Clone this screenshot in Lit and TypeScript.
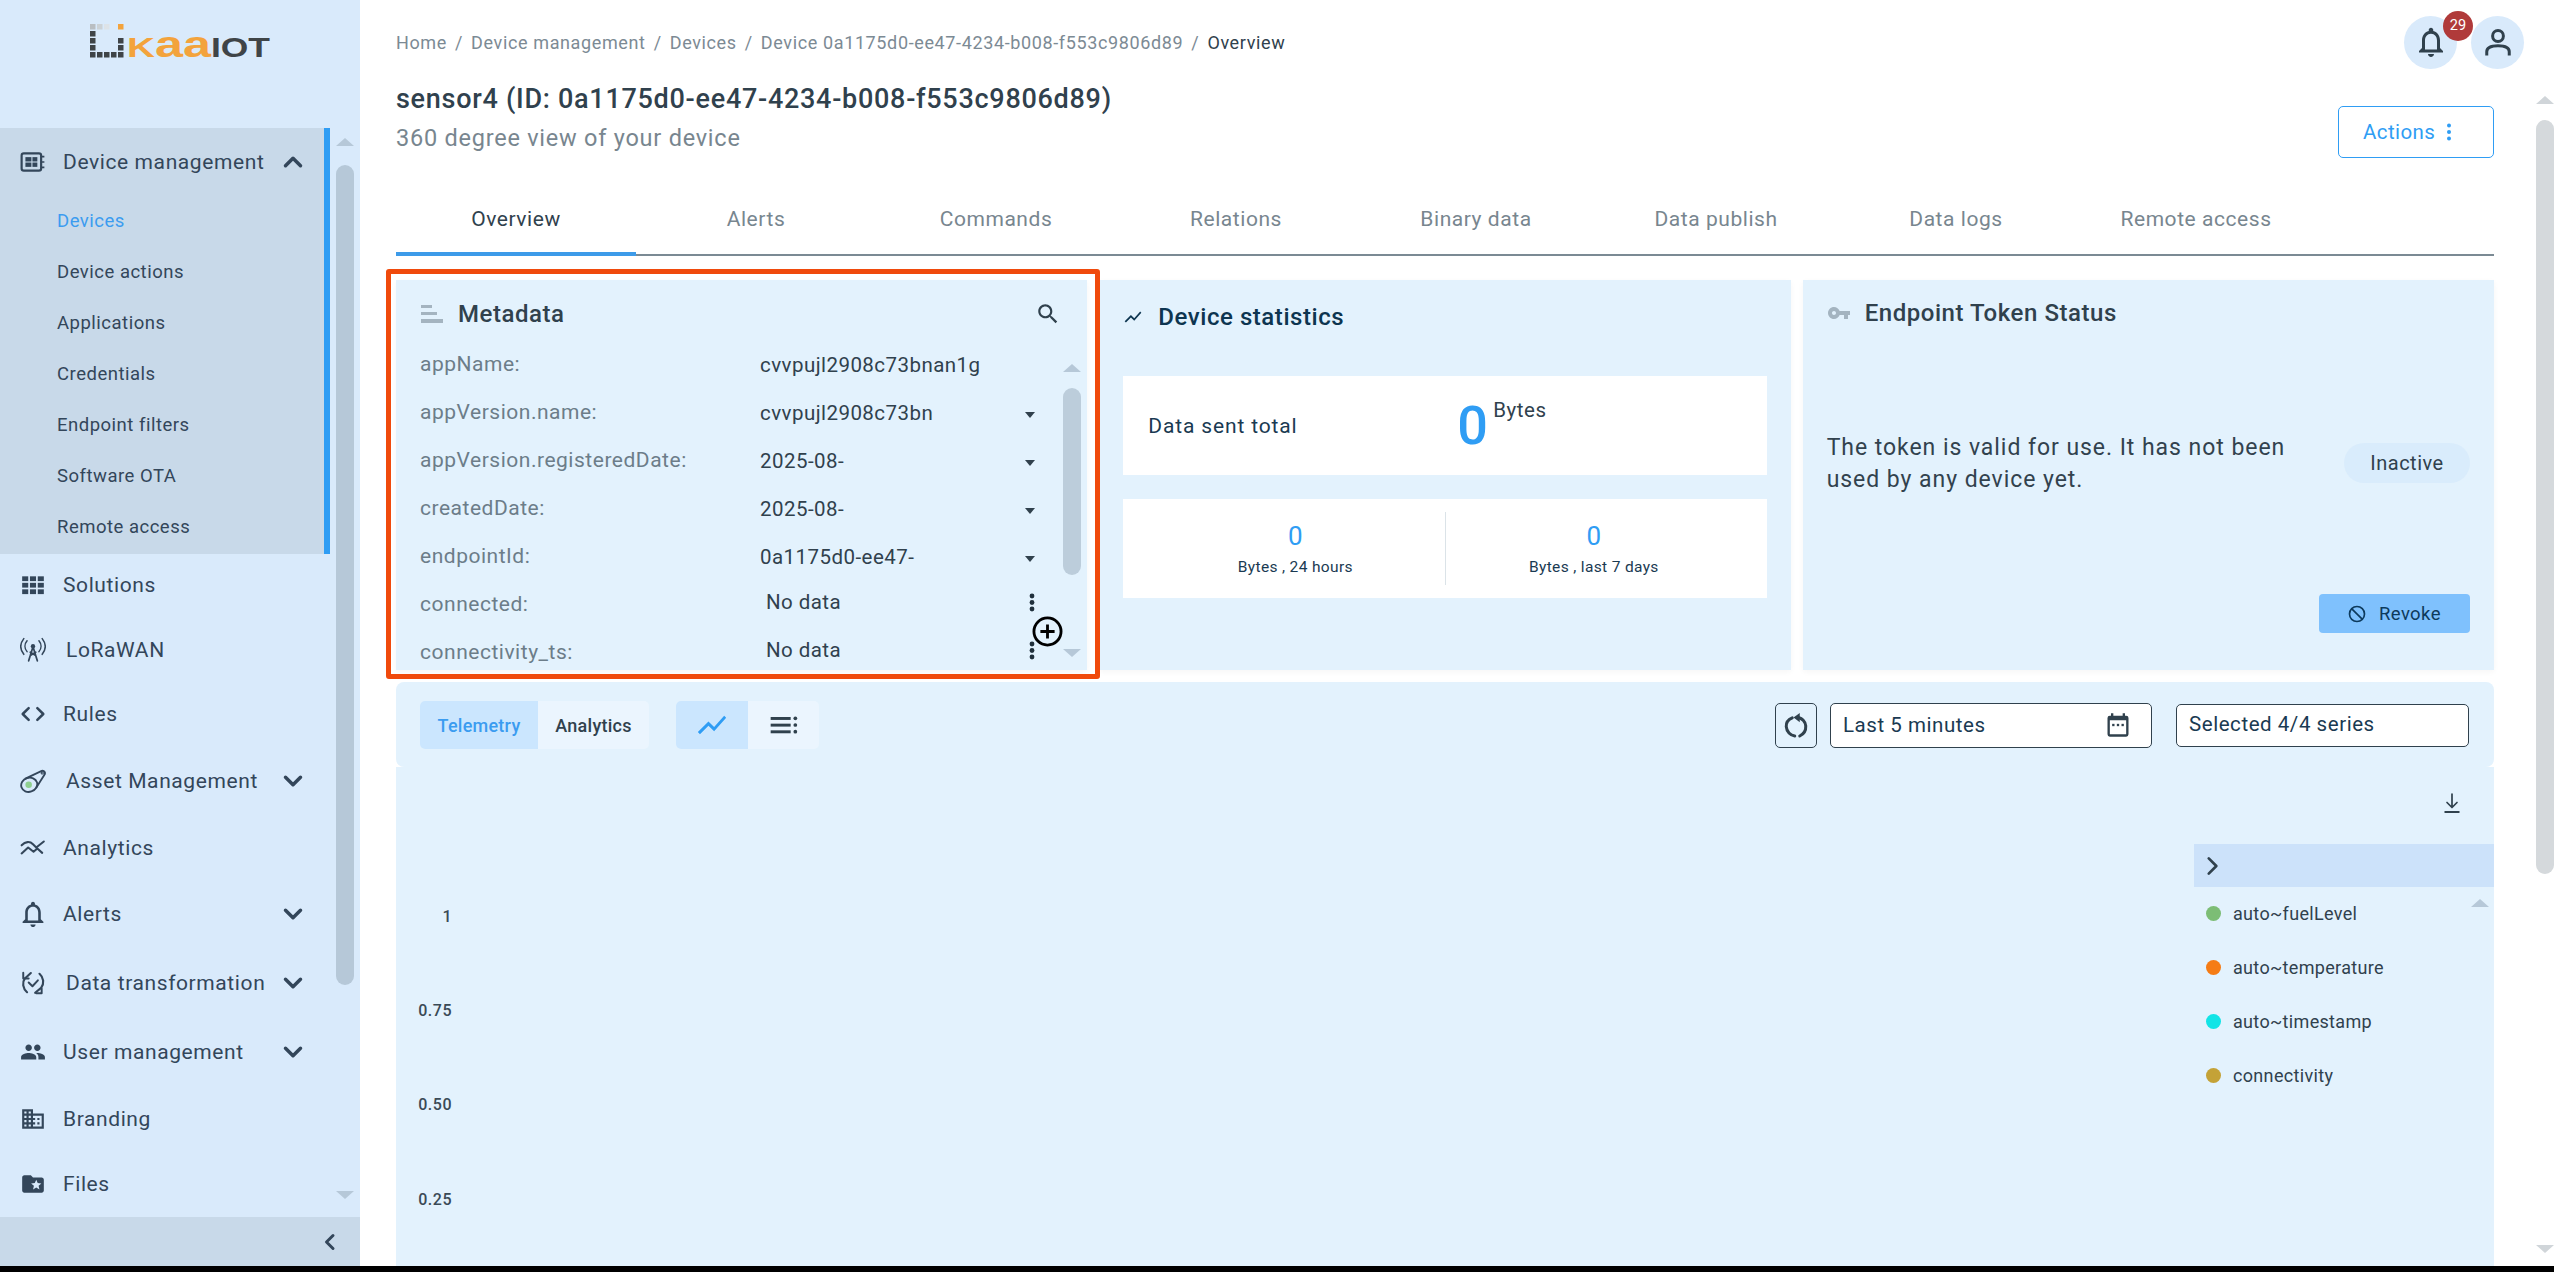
import { LitElement, html, css, svg } from "lit";
import { customElement } from "lit/decorators.js";

const p = (d: string) => svg`<path d=${d} fill="currentColor"></path>`;
const ic = (body: unknown, cls = "i24", vb = "0 0 24 24") => html`<svg class=${cls} viewBox=${vb}>${body}</svg>`;
const stroke = (d: string, w = 2) => svg`<path d=${d} fill="none" stroke="currentColor" stroke-width=${w} stroke-linecap="round" stroke-linejoin="round"></path>`;

const BELL = "M12 22c1.1 0 2-.9 2-2h-4c0 1.1.9 2 2 2zm6-6v-5c0-3.07-1.63-5.64-4.5-6.32V4c0-.83-.67-1.5-1.5-1.5s-1.5.67-1.5 1.5v.68C7.64 5.36 6 7.92 6 11v5l-2 2v1h16v-1l-2-2zm-2 1H8v-6c0-2.48 1.51-4.5 4-4.5s4 2.02 4 4.5v6z";
const PEOPLE = "M16 11c1.66 0 2.99-1.34 2.99-3S17.66 5 16 5c-1.66 0-3 1.34-3 3s1.34 3 3 3zm-8 0c1.66 0 2.99-1.34 2.99-3S9.66 5 8 5C6.34 5 5 6.34 5 8s1.34 3 3 3zm0 2c-2.33 0-7 1.17-7 3.5V19h14v-2.5c0-2.33-4.67-3.5-7-3.5zm8 0c-.29 0-.62.02-.97.05 1.16.84 1.97 1.97 1.97 3.45V19h6v-2.5c0-2.33-4.67-3.5-7-3.5z";
const DOMAIN = "M12 7V3H2v18h20V7H12zM6 19H4v-2h2v2zm0-4H4v-2h2v2zm0-4H4V9h2v2zm0-4H4V5h2v2zm4 12H8v-2h2v2zm0-4H8v-2h2v2zm0-4H8V9h2v2zm0-4H8V5h2v2zm10 12h-8v-2h2v-2h-2v-2h2v-2h-2V9h8v10zm-2-8h-2v2h2v-2zm0 4h-2v2h2v-2z";
const FOLDER = "M20 6h-8l-2-2H4c-1.1 0-1.99.9-1.99 2L2 18c0 1.1.9 2 2 2h16c1.1 0 2-.9 2-2V8c0-1.1-.9-2-2-2zm-2.06 11L15 15.28 12.06 17l.78-3.33-2.59-2.24 3.41-.29L15 8l1.34 3.14 3.41.29-2.59 2.24.78 3.33z";
const SEARCH = "M15.5 14h-.79l-.28-.27C15.41 12.59 16 11.11 16 9.5 16 5.91 13.09 3 9.5 3S3 5.91 3 9.5 5.91 16 9.5 16c1.61 0 3.09-.59 4.23-1.57l.27.28v.79l5 4.99L20.49 19l-4.99-5zm-6 0C7.01 14 5 11.99 5 9.5S7.01 5 9.5 5 14 7.01 14 9.5 11.99 14 9.5 14z";
const KEY = "M12.65 10C11.83 7.67 9.61 6 7 6c-3.31 0-6 2.69-6 6s2.69 6 6 6c2.61 0 4.83-1.67 5.65-4H17v4h4v-4h2v-4H12.65zM7 14c-1.1 0-2-.9-2-2s.9-2 2-2 2 .9 2 2-.9 2-2 2z";
const CHART = "M3.5 18.49l6-6.01 4 4L22 6.92l-1.41-1.41-7.09 7.97-4-4L2 16.99z";

const icons: Record<string, unknown> = {
  device: svg`<rect x="1.5" y="4" width="18" height="16" rx="2" fill="none" stroke="currentColor" stroke-width="2"/><rect x="5" y="7.5" width="5.5" height="4" fill="currentColor"/><rect x="11.5" y="7.5" width="4.5" height="4" fill="currentColor"/><rect x="5" y="12.5" width="5.5" height="4" fill="currentColor"/><rect x="11.5" y="12.5" width="4.5" height="4" fill="currentColor"/><path d="M20 7h2.5M20 12h2.5M20 17h2.5" stroke="currentColor" stroke-width="1.6"/>`,
  apps: svg`${[0, 1, 2].map((r) => [0, 1, 2].map((c) => svg`<rect x=${2 + c * 7.2} y=${4 + r * 6} width="5.6" height="4.4" fill="currentColor"/>`))}`,
  antenna: svg`<circle cx="12" cy="8.5" r="2" fill="currentColor"/>${stroke("M12 9l-4 13M12 9l4 13M9.5 17l5-3M9.5 14l5 3", 1.6)}${stroke("M6.5 3.5c-2.5 3-2.5 7 0 10M17.5 3.5c2.5 3 2.5 7 0 10M3.5 1.5c-3.5 4.5-3.5 10 0 14.500M20.500 1.500c3.500 4.500 3.500 10 0 14.500", 1.4)}`,
  code: stroke("M8 6.500L2.500 12L8 17.500M16 6.500L21.500 12L16 17.500", 2.300),
  asset: svg`<ellipse cx="8.500" cy="15.500" rx="7.500" ry="6.500" fill="none" stroke="currentColor" stroke-width="1.700" transform="rotate(-18 8.500 15.500)"/><circle cx="8" cy="15.500" r="3" fill="#8fd08f"/><path d="M4.500 10L20 2.600C22.800 2.200 23.800 4.600 22.400 6.400L14.800 18.500" fill="none" stroke="currentColor" stroke-width="1.700"/><circle cx="20.500" cy="4.600" r="1" fill="none" stroke="currentColor" stroke-width="1"/>`,
  analytics: stroke("M1.500 9.500C5 6 9 5.500 12 8.500L15 11.500L22 6M1.500 17L7.500 11.500L12.500 15.500L16 12.500L20.500 16.500", 1.900),
  bell: svg`<svg x="0" y="0" width="24" height="24" viewBox="2 2 20 20">${p(BELL)}</svg>`,
  transform: svg`${stroke("M6.500 20.500C2.500 17 1.800 11.500 4.500 7.800M18 3.500C22 7 22.500 12.500 19.500 16.500M4.500 7.800L10 2.800M14 21L19.500 16.500", 2)}${stroke("M8 11.500L11.500 15L16.500 9.500M15 21.500H20V17M3 2.500V7.800H8", 1.800)}`,
  people: p(PEOPLE),
  domain: p(DOMAIN),
  folder: p(FOLDER),
};

const subItems = ["Devices", "Device actions", "Applications", "Credentials", "Endpoint filters", "Software OTA", "Remote access"];
const navItems = [
  { n: "Solutions", i: "apps", h: 61 },
  { n: "LoRaWAN", i: "antenna", h: 69, wide: true },
  { n: "Rules", i: "code", h: 60 },
  { n: "Asset Management", i: "asset", h: 74, wide: true, more: true },
  { n: "Analytics", i: "analytics", h: 59 },
  { n: "Alerts", i: "bell", h: 74, more: true },
  { n: "Data transformation", i: "transform", h: 64, wide: true, more: true },
  { n: "User management", i: "people", h: 74, more: true },
  { n: "Branding", i: "domain", h: 59 },
  { n: "Files", i: "folder", h: 71 },
];
const tabs = ["Overview", "Alerts", "Commands", "Relations", "Binary data", "Data publish", "Data logs", "Remote access"];
const meta = [
  { k: "appName:", v: "cvvpujl2908c73bnan1g", t: "" },
  { k: "appVersion.name:", v: "cvvpujl2908c73bn", t: "caret" },
  { k: "appVersion.registeredDate:", v: "2025-08-", t: "caret" },
  { k: "createdDate:", v: "2025-08-", t: "caret" },
  { k: "endpointId:", v: "0a1175d0-ee47-", t: "caret" },
  { k: "connected:", v: "No data", t: "dots" },
  { k: "connectivity_ts:", v: "No data", t: "dots" },
];
const legend = [
  { n: "auto~fuelLevel", c: "#7cbd75" },
  { n: "auto~temperature", c: "#f57c15" },
  { n: "auto~timestamp", c: "#12e4e6" },
  { n: "connectivity", c: "#c4a237" },
];
const logoBlocks: [number, number, string][] = [
  [0, 0, "#b9bec2"], [7, 0, "#ccd2d6"], [14, 0, "#dde3e8"],
  [0, 7, "#3f4447"], [0, 14, "#3f4447"], [0, 21, "#3f4447"], [0, 28, "#3f4447"],
  [7, 28, "#3f4447"], [14, 28, "#3f4447"], [21, 28, "#3f4447"], [28, 28, "#3f4447"],
  [28, 21, "#3f4447"], [28, 14, "#3f4447"],
  [28, 0, "#f3a33c"],
];

@customElement("app-root")
export class AppRoot extends LitElement {
  static styles = css`
    :host { display: block; width: 2554px; height: 1272px; overflow: hidden; background: #000; font-family: Roboto, "Noto Sans", sans-serif; color: #30414d; }
    * { box-sizing: border-box; }
    svg { display: block; flex: none; }
    .i24 { width: 26px; height: 26px; }
    .page { display: grid; grid-template-columns: 360px 1fr 18px; height: 1266px; background: #fff; overflow: hidden; }

    .side { background: #d9eafb; display: flex; flex-direction: column; height: 1266px; color: #33465a; }
    .logo { height: 128px; flex: none; padding: 24px 0 0 89px; }
    .logo svg { width: 182px; height: 44px; }
    .navwrap { flex: 1; display: flex; min-height: 0; overflow: hidden; }
    .nav { width: 336px; flex: none; }
    .group { width: 330px; height: 426px; background: #c8d9e9; border-right: 6px solid #2f9df4; }
    .row { display: flex; align-items: center; padding-left: 20px; font-size: 21px; letter-spacing: 0.6px; white-space: nowrap; }
    .row .ic { margin-right: 17px; }
    .row.wide .ic { margin-right: 20px; }
    .row .chev { margin-left: auto; margin-right: 28px; width: 30px; height: 30px; }
    .ghead { height: 67.5px; }
    .ghead .chev { margin-right: 16px; }
    .sub { height: 51px; padding-left: 57px; display: flex; align-items: center; font-size: 18.5px; letter-spacing: 0.5px; }
    .sub.on { color: #3b9cf0; }
    .sbar { width: 18px; flex: none; display: flex; flex-direction: column; align-items: center; }
    .sbar .top { height: 37px; display: flex; align-items: center; padding-bottom: 9px; }
    .sbar .thumb { width: 18px; height: 820px; border-radius: 9px; background: #b6c8d8; }
    .sbar .bot { margin-top: 206px; }
    .tri-up { width: 0; height: 0; border-left: 9px solid transparent; border-right: 9px solid transparent; border-bottom: 8px solid #b6c8d8; }
    .tri-down { width: 0; height: 0; border-left: 9px solid transparent; border-right: 9px solid transparent; border-top: 8px solid #b6c8d8; }
    .sfoot { height: 49px; flex: none; background: #c8d9e9; display: flex; align-items: center; justify-content: flex-end; padding-right: 18px; }
    .sfoot svg { width: 24px; height: 24px; }

    .main { padding: 0 42px 0 36px; min-width: 0; }
    .topbar { height: 84px; display: flex; align-items: center; justify-content: space-between; }
    .crumbs { font-size: 18px; letter-spacing: 0.63px; color: #7c8a94; display: flex; gap: 8px; }
    .crumbs b { font-weight: 400; color: #30414d; }
    .top-icons { display: flex; gap: 14px; margin-right: -30px; }
    .circ { width: 53px; height: 53px; border-radius: 50%; background: #d9eafb; display: flex; align-items: center; justify-content: center; position: relative; color: #30414d; }
    .circ svg { width: 36px; height: 36px; }
    .badge { position: absolute; right: -16px; top: -5px; width: 30px; height: 30px; border-radius: 50%; background: #b03a3a; color: #fff; font-size: 14.5px; display: flex; align-items: center; justify-content: center; }
    .head { height: 76px; display: flex; justify-content: space-between; }
    h1 { margin: 0; font-size: 27px; line-height: 30px; font-weight: 500; letter-spacing: 0.72px; color: #30414d; }
    .subt { margin-top: 6px; font-size: 23.5px; line-height: 36px; letter-spacing: 0.76px; color: #78868f; }
    .actions { margin-top: 22px; width: 156px; height: 52px; border: 1px solid #2f9df4; border-radius: 5px; display: flex; align-items: center; padding-left: 24px; gap: 6px; color: #2f9df4; font-size: 20.5px; letter-spacing: 0.4px; }
    .actions svg { width: 16px; height: 20px; }
    .tabs { margin-top: 22px; display: flex; border-bottom: 2px solid #7b8a94; height: 74px; }
    .tab { width: 240px; display: flex; align-items: center; justify-content: center; padding-top: 4px; font-size: 21px; letter-spacing: 0.55px; color: #78868f; height: 74px; border-bottom: 4px solid transparent; }
    .tab.on { color: #30414d; border-bottom-color: #3d9be9; }

    .cards { margin-top: 24px; display: grid; grid-template-columns: repeat(3, minmax(0, 1fr)); grid-template-rows: 390px; gap: 12px; }
    .card { background: #e3f2fd; position: relative; display: flex; flex-direction: column; min-height: 0; box-shadow: 0 2px 6px rgba(0, 0, 0, 0.04); }
    .chead { display: flex; align-items: center; gap: 14px; font-size: 24px; font-weight: 500; letter-spacing: 0.55px; padding-left: 24px; color: #30414d; flex: none; }
    .frame { position: absolute; left: -10px; top: -11px; width: 714px; height: 410px; border: 5px solid #f04a0c; border-radius: 3px; z-index: 5; pointer-events: none; }

    .m-head { height: 60px; padding-top: 7px; padding-right: 26px; }
    .m-head .lines { color: #a4b4c0; width: 24px; height: 24px; }
    .m-head .search { margin-left: auto; width: 26px; height: 26px; color: #30414d; }
    .m-rows { flex: 1; overflow: hidden; min-height: 0; }
    .m-row { height: 48px; display: flex; align-items: center; padding: 0 45px 0 24px; font-size: 20.5px; letter-spacing: 0.45px; }
    .m-key { width: 340px; flex: none; color: #6c7d89; font-size: 21px; letter-spacing: 0.52px; }
    .m-val { flex: 1; padding-top: 2px; color: #30414d; }
    .m-val.nd { padding: 0 0 4px 6px; }
    .m-ic { width: 24px; display: flex; justify-content: center; }
    .caret { width: 0; height: 0; border-left: 5.5px solid transparent; border-right: 5.5px solid transparent; border-top: 6.5px solid #30414d; margin-top: 6px; }
    .kebab { width: 6px; height: 19px; margin: -4px 0 0 4px; }
    .m-bar { position: absolute; right: 6px; top: 84px; width: 18px; height: 300px; display: flex; flex-direction: column; }
    .m-bar .thumb { width: 18px; height: 187px; border-radius: 9px; background: #bccddb; margin-top: 16px; }
    .m-bar .tri-down { margin-top: 74px; }
    .fab { position: absolute; left: 636px; top: 336px; width: 31px; height: 31px; color: #000; }

    .s-head { height: 74px; padding-left: 24px; color: #0d3550; gap: 15px; }
    .s-head svg { width: 20px; height: 20px; }
    .white { margin: 0 24px; height: 99px; background: #fff; flex: none; }
    .w1 { margin-top: 22px; display: flex; padding-left: 25px; align-items: center; color: #1a3a52; }
    .w1 .lbl { width: 309px; font-size: 21px; letter-spacing: 0.85px; flex: none; }
    .w1 .big { font-size: 54px; line-height: 54px; font-weight: 500; color: #2f9df4; width: 30px; margin-right: 6px; }
    .w1 .unit { align-self: flex-start; margin-top: 22px; line-height: 24px; font-size: 20.5px; letter-spacing: 0.5px; color: #30414d; }
    .w2 { margin-top: 24px; display: grid; grid-template-columns: 322px 322px; padding: 13px 0; }
    .col { display: flex; flex-direction: column; align-items: center; padding-top: 7px; height: 73px; color: #1a3a52; }
    .col.l { padding-left: 22px; }
    .col.r { border-left: 1px solid #dbe3e8; padding-right: 26px; }
    .col .v { font-size: 26px; line-height: 34px; color: #2f9df4; }
    .col .t { font-size: 15.5px; line-height: 28px; letter-spacing: 0.35px; }

    .t-head { height: 66px; }
    .t-head svg { width: 24px; height: 24px; color: #a4b4c0; }
    .t-body { margin: 85px 24px 0; display: flex; justify-content: space-between; align-items: center; height: 66px; }
    .t-text { width: 480px; font-size: 23px; line-height: 32px; letter-spacing: 0.95px; color: #32424e; }
    .pill { width: 126px; height: 40px; margin-top: -2px; border-radius: 20px; background: #d9ecfc; display: flex; align-items: center; justify-content: center; font-size: 20px; letter-spacing: 0.5px; }
    .t-foot { margin-top: auto; padding: 0 24px 37px; display: flex; justify-content: flex-end; }
    .revoke { width: 151px; height: 39px; background: #7fc1fd; border-radius: 4px; display: flex; align-items: center; padding-left: 28px; gap: 12px; color: #0d3a5c; font-size: 18.5px; letter-spacing: 0.4px; }
    .revoke svg { width: 20px; height: 20px; }

    .chart { margin-top: 12px; }
    .tool { height: 85px; background: #e3f2fd; border-radius: 8px; padding: 19px 25px 0 24px; display: flex; align-items: flex-start; }
    .toggle { display: flex; height: 48px; border-radius: 5px; overflow: hidden; background: #ebf5fe; font-size: 18px; letter-spacing: 0.25px; font-weight: 500; }
    .toggle > div { display: flex; align-items: center; justify-content: center; }
    .toggle .on { background: #cbe6fe; color: #3b9cf0; }
    .t1 { width: 118px; } .t2 { width: 111px; }
    .t3 { width: 72px; } .t4 { width: 71px; }
    .toggle.icons { margin-left: 27px; }
    .t3 svg { width: 34px; height: 34px; color: #2f9df4; }
    .t4 svg { width: 32px; height: 32px; }
    .refresh { margin-left: auto; margin-top: 2px; width: 42px; height: 45px; border: 1px solid #30414d; border-radius: 5px; display: flex; align-items: center; justify-content: center; }
    .refresh svg { width: 30px; height: 30px; }
    .input { background: #fff; border: 1.5px solid #30414d; border-radius: 5px; display: flex; align-items: center; font-size: 20.5px; letter-spacing: 0.55px; color: #1a3a52; }
    .date { margin: 2px 0 0 13px; width: 322px; height: 45px; padding: 0 19px 2px 12px; justify-content: space-between; }
    .date svg { width: 28px; height: 28px; color: #30414d; }
    .sel { margin: 3px 0 0 24px; width: 293px; height: 43px; padding: 0 0 3px 12px; }

    .cbody { height: 499px; background: #e3f2fd; display: flex; }
    .yaxis { width: 56px; flex: none; padding-top: 102px; font-size: 16px; font-weight: 500; letter-spacing: 0.5px; color: #3a4a56; text-align: right; }
    .yaxis div { height: 94.3px; display: flex; align-items: center; justify-content: flex-end; }
    .lgd { margin-left: auto; width: 300px; position: relative; }
    .dl { height: 77px; display: flex; justify-content: flex-end; align-items: center; padding: 0 30px 6px 0; }
    .dl svg { width: 24px; height: 24px; }
    .lhead { height: 43px; background: #cce2fa; display: flex; align-items: center; padding-left: 5px; }
    .lhead svg { width: 26px; height: 26px; }
    .item { height: 53.8px; display: flex; align-items: center; padding-left: 12px; gap: 12px; font-size: 18px; letter-spacing: 0.33px; color: #30414d; }
    .dot { width: 15px; height: 15px; border-radius: 50%; }
    .lgd .tri-up { position: absolute; right: 5px; top: 132px; }

    .pbar { display: flex; flex-direction: column; align-items: center; background: #fff; padding-top: 96px; }
    .pbar .thumb { width: 18px; height: 754px; border-radius: 9px; background: #d5d9dc; margin-top: 16px; }
    .pbar .tri-up { border-bottom-color: #d0d5d9; }
    .pbar .tri-down { border-top-color: #d0d5d9; margin-top: 371px; }
  `;

  render() {
    return html`
      <div class="page">
        ${this.sidebar()}
        <main class="main">
          <div class="topbar">
            <div class="crumbs"><span>Home</span><span>/</span><span>Device management</span><span>/</span><span>Devices</span><span>/</span><span>Device 0a1175d0-ee47-4234-b008-f553c9806d89</span><span>/</span><b>Overview</b></div>
            <div class="top-icons">
              <div class="circ">${ic(p(BELL))}<span class="badge">29</span></div>
              <div class="circ">${ic(svg`<circle cx="12" cy="8" r="3.600" fill="none" stroke="currentColor" stroke-width="2"/><path d="M4.500 21v-2.500c0-2.500 2.500-4 7.500-4s7.500 1.500 7.500 4V21" fill="none" stroke="currentColor" stroke-width="2"/>`)}</div>
            </div>
          </div>
          <div class="head">
            <div>
              <h1>sensor4 (ID: 0a1175d0-ee47-4234-b008-f553c9806d89)</h1>
              <div class="subt">360 degree view of your device</div>
            </div>
            <div class="actions">Actions ${ic(svg`<circle cx="6" cy="3.500" r="2" fill="currentColor"/><circle cx="6" cy="10" r="2" fill="currentColor"/><circle cx="6" cy="16.500" r="2" fill="currentColor"/>`, "", "0 0 12 20")}</div>
          </div>
          <div class="tabs">${tabs.map((t, i) => html`<div class="tab ${i === 0 ? "on" : ""}">${t}</div>`)}</div>
          <div class="cards">
            ${this.metadata()}${this.stats()}${this.token()}
          </div>
          ${this.chart()}
        </main>
        <div class="pbar">
          <div class="tri-up"></div><div class="thumb"></div><div class="tri-down"></div>
        </div>
      </div>`;
  }

  sidebar() {
    return html`
      <aside class="side">
        <div class="logo">
          <svg viewBox="0 0 182 44">
            ${logoBlocks.map(([x, y, c]) => svg`<rect x=${x + 1} y=${y} width="5.500" height="5.500" fill=${c}></rect>`)}
            <text x="38" y="33" font-family="Liberation Sans, sans-serif" font-weight="700" font-size="27" fill="#f3a33c" textLength="28" lengthAdjust="spacingAndGlyphs">K</text>
            <text x="66" y="33" font-family="Liberation Sans, sans-serif" font-weight="700" font-size="36" fill="#f3a33c" textLength="56" lengthAdjust="spacingAndGlyphs">aa</text>
            <text x="122" y="33" font-family="Liberation Sans, sans-serif" font-weight="700" font-size="27" fill="#3f4447" textLength="59" lengthAdjust="spacingAndGlyphs">IOT</text>
          </svg>
        </div>
        <div class="navwrap">
          <div class="nav">
            <div class="group">
              <div class="row ghead">
                <span class="ic">${ic(icons.device)}</span>Device management
                ${ic(stroke("M6 15l6-6 6 6", 2.800), "chev")}
              </div>
              ${subItems.map((s, i) => html`<div class="sub ${i === 0 ? "on" : ""}">${s}</div>`)}
            </div>
            ${navItems.map((n) => html`
              <div class="row ${n.wide ? "wide" : ""}" style="height:${n.h}px">
                <span class="ic">${ic(icons[n.i])}</span>${n.n}
                ${n.more ? ic(stroke("M6 9l6 6 6-6", 2.800), "chev") : ""}
              </div>`)}
          </div>
          <div class="sbar">
            <div class="top"><div class="tri-up"></div></div>
            <div class="thumb"></div>
            <div class="bot tri-down"></div>
          </div>
        </div>
        <div class="sfoot">${ic(stroke("M15 5.500L8.500 12L15 18.500", 3))}</div>
      </aside>`;
  }

  metadata() {
    return html`
      <section class="card">
        <div class="chead m-head">
          ${ic(svg`<rect x="1" y="3" width="11" height="3" fill="currentColor"/><rect x="1" y="10" width="16" height="3" fill="currentColor"/><rect x="1" y="17" width="22" height="4" fill="currentColor"/>`, "lines")}
          Metadata
          ${ic(p(SEARCH), "search")}
        </div>
        <div class="m-rows">
          ${meta.map((m) => html`
            <div class="m-row">
              <div class="m-key">${m.k}</div>
              <div class="m-val ${m.t === "dots" ? "nd" : ""}">${m.v}</div>
              <div class="m-ic">
                ${m.t === "caret" ? html`<div class="caret"></div>` : ""}
                ${m.t === "dots" ? ic(svg`<circle cx="3" cy="3" r="2.400" fill="#20303c"/><circle cx="3" cy="9.500" r="2.400" fill="#20303c"/><circle cx="3" cy="16" r="2.400" fill="#20303c"/>`, "kebab", "0 0 6 19") : ""}
              </div>
            </div>`)}
        </div>
        <div class="m-bar"><div class="tri-up"></div><div class="thumb"></div><div class="tri-down"></div></div>
        ${ic(svg`<circle cx="12" cy="12" r="10.500" fill="#e3f2fd" stroke="currentColor" stroke-width="2.200"/><path d="M12 6.500v11M6.500 12h11" stroke="currentColor" stroke-width="2.200"/>`, "fab")}
        <div class="frame"></div>
      </section>`;
  }

  stats() {
    return html`
      <section class="card">
        <div class="chead s-head">${ic(p(CHART))} Device statistics</div>
        <div class="white w1">
          <div class="lbl">Data sent total</div>
          <div class="big">0</div>
          <div class="unit">Bytes</div>
        </div>
        <div class="white w2">
          <div class="col l"><div class="v">0</div><div class="t">Bytes , 24 hours</div></div>
          <div class="col r"><div class="v">0</div><div class="t">Bytes , last 7 days</div></div>
        </div>
      </section>`;
  }

  token() {
    return html`
      <section class="card">
        <div class="chead t-head">${ic(p(KEY))} Endpoint Token Status</div>
        <div class="t-body">
          <div class="t-text">The token is valid for use. It has not been used by any device yet.</div>
          <div class="pill">Inactive</div>
        </div>
        <div class="t-foot">
          <div class="revoke">${ic(svg`<circle cx="12" cy="12" r="9" fill="none" stroke="currentColor" stroke-width="2"/><path d="M5.800 5.800l12.400 12.400" stroke="currentColor" stroke-width="2"/>`)} Revoke</div>
        </div>
      </section>`;
  }

  chart() {
    return html`
      <section class="chart">
        <div class="tool">
          <div class="toggle"><div class="t1 on">Telemetry</div><div class="t2">Analytics</div></div>
          <div class="toggle icons">
            <div class="t3 on">${ic(p(CHART))}</div>
            <div class="t4">${ic(svg`<rect x="2" y="6" width="15" height="2.200" fill="currentColor"/><rect x="2" y="11" width="15" height="2.200" fill="currentColor"/><rect x="2" y="16" width="15" height="2.200" fill="currentColor"/><circle cx="20.500" cy="7" r="1.400" fill="currentColor"/><circle cx="20.500" cy="12" r="1.400" fill="currentColor"/><circle cx="20.500" cy="17" r="1.400" fill="currentColor"/>`)}</div>
          </div>
          <div class="refresh">${ic(svg`${stroke("M9 5.500C5.500 7 4 10 4.200 12.500C4.500 16.500 7.500 19.500 11 20M15 20C18 18.500 20 15.500 19.800 12C19.500 8.500 17 6 13.500 5", 2.400)}<path d="M15 1.500v7.500l-5-3.800z" fill="currentColor"/>`)}</div>
          <div class="input date">Last 5 minutes ${ic(svg`<path d="M19 4h-1V2h-2v2H8V2H6v2H5a2 2 0 0 0-2 2v14a2 2 0 0 0 2 2h14a2 2 0 0 0 2-2V6a2 2 0 0 0-2-2zm0 16H5V8h14v12z" fill="currentColor"/><rect x="7" y="11" width="2" height="2" fill="currentColor"/><rect x="11" y="11" width="2" height="2" fill="currentColor"/><rect x="15" y="11" width="2" height="2" fill="currentColor"/>`)}</div>
          <div class="input sel">Selected 4/4 series</div>
        </div>
        <div class="cbody">
          <div class="yaxis"><div>1</div><div>0.75</div><div>0.50</div><div>0.25</div></div>
          <div class="lgd">
            <div class="dl">${ic(svg`${stroke("M12 3v13M7 11.500l5 5 5-5", 1.700)}<rect x="4.500" y="20" width="15" height="2" fill="currentColor"/>`)}</div>
            <div class="lhead">${ic(stroke("M9 5l7 7-7 7", 2.500))}</div>
            ${legend.map((l) => html`<div class="item"><span class="dot" style="background:${l.c}"></span>${l.n}</div>`)}
            <div class="tri-up"></div>
          </div>
        </div>
      </section>`;
  }
}
